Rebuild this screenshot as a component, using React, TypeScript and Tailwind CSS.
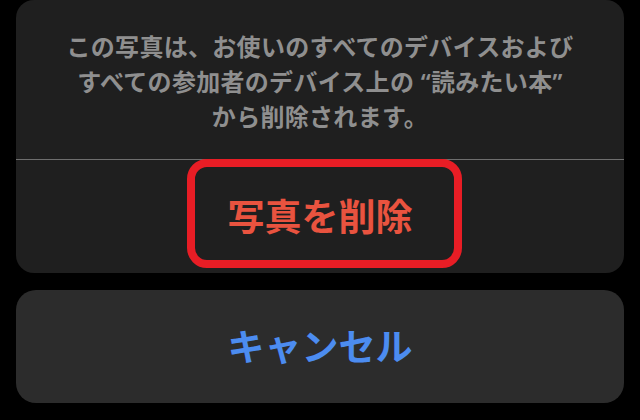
import React from 'react';

const font = {
  fontFamily: '"Noto Sans", "Noto Sans CJK JP", sans-serif',
};

export default function App() {
  return (
    <div
      className="w-[640px] h-[420px] bg-black px-4 flex flex-col gap-[17px] overflow-hidden"
      style={font}
    >
      {/* action sheet */}
      <div className="bg-[#1f1f1f] rounded-b-[18px] rounded-t-[18px] flex flex-col shrink-0">
        <div className="h-[159px] pt-[29px] px-4 text-center text-[24px] leading-[35px] tracking-[0.3px] font-semibold text-[#8f8f8f]">
          <p>この写真は、お使いのすべてのデバイスおよび</p>
          <p>すべての参加者のデバイス上の “読みたい本”</p>
          <p>から削除されます。</p>
        </div>
        <div className="h-px bg-[#6e6e6e]" />
        <div className="relative h-[113px] flex items-center justify-center">
          <span className="text-[37px] font-bold text-[#e9533f] leading-none -mt-[1px]">写真を削除</span>
          {/* annotation box */}
          <div className="absolute left-[171px] top-[-1px] w-[275px] h-[109px] rounded-[20px] border-[8px] border-[#e81d25]" />
        </div>
      </div>

      {/* cancel */}
      <div className="h-[113px] bg-[#2c2c2c] rounded-[20px] flex items-center justify-center shrink-0">
        <span className="text-[37px] font-bold text-[#4c8cf0] leading-none">キャンセル</span>
      </div>
    </div>
  );
}
